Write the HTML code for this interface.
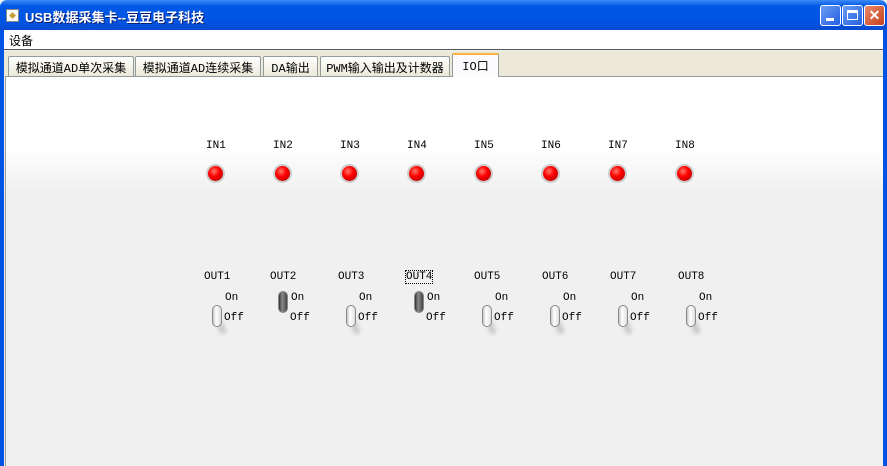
<!DOCTYPE html>
<html><head><meta charset="utf-8"><style>
*{margin:0;padding:0;box-sizing:border-box}
body{width:887px;height:466px;overflow:hidden;position:relative;background:#f0f0f0;font-family:"Liberation Mono","Noto Sans CJK SC","WenQuanYi Zen Hei",monospace;font-size:11px;color:#000}
.title{position:absolute;left:0;top:0;width:887px;height:30px;background:linear-gradient(#3d8af7,#0058e6 20%,#0054e3 70%,#0a4ad0);border-radius:7px 7px 0 0}
.title .t{position:absolute;left:25px;top:7px;color:#fff;font-weight:bold;font-size:13px;font-family:"Liberation Sans","Noto Sans CJK SC",sans-serif;text-shadow:1px 1px #0a1e6e}
.ico{position:absolute;left:6px;top:9px;width:13px;height:13px;background:#fff;border:1px solid #888}
.ico:after{content:"";position:absolute;left:3px;top:3px;width:5px;height:5px;background:#c8a040;transform:rotate(45deg)}
.btn{position:absolute;top:5px;width:21px;height:21px;border:1px solid #fff;border-radius:3px;background:linear-gradient(135deg,#6c9cf5,#2360e0)}
.btn.x{background:linear-gradient(135deg,#e8896a,#c8401c)}
.lb{position:absolute;left:0;top:30px;width:4px;height:436px;background:#0054e3}
.rb{position:absolute;right:0;top:30px;width:4px;height:436px;background:#0054e3}
.menu{position:absolute;left:4px;top:30px;width:879px;height:20px;background:#fff;border-bottom:1px solid #555}
.menu span{position:absolute;left:5px;top:2px;font-size:12px}
.tabs{position:absolute;left:4px;top:51px;width:879px;height:25px;background:#ece9d8}
.tab{position:absolute;top:5px;height:20px;border:1px solid #919b9c;border-bottom:none;background:linear-gradient(#fff,#ece9d8);font-size:12px;padding:2px 0 0 0;text-align:center;border-radius:2px 2px 0 0}
.tab.sel{top:2px;height:24px;background:#fcfcfe;border-top:2px solid #f7b53e;z-index:2}
.panel{position:absolute;left:5px;top:76px;width:878px;height:390px;border-left:1px solid #919b9c;border-top:1px solid #919b9c;background:linear-gradient(#fff 0,#fff 70px,#f0f0f0 115px)}
.lab{position:absolute;font-size:11px}
.led{position:absolute;width:15px;height:15px;border-radius:50%;background:radial-gradient(circle at 40% 35%,#ff7a6a,#f00 40%,#b00000 90%);box-shadow:0 0 0 2px #ccc}
.lev{position:absolute;width:10px;height:22px;border-radius:5px;background:linear-gradient(90deg,#c8c8c8,#fff 40%,#ddd);border:1px solid #888}
.lev.on{background:linear-gradient(90deg,#333,#888 40%,#444)}
.sh{position:absolute;width:6px;height:14px;background:#aaa;filter:blur(2px);transform:rotate(-25deg);opacity:.6}
</style></head><body>
<div class="title"><div class="ico"></div><div class="t">USB数据采集卡--豆豆电子科技</div>
<div class="btn" style="left:820px"><div style="position:absolute;left:5px;top:12px;width:8px;height:3px;background:#fff"></div></div>
<div class="btn" style="left:842px"><div style="position:absolute;left:4px;top:4px;width:11px;height:10px;border:1px solid #fff;border-top:3px solid #fff"></div></div>
<div class="btn x" style="left:864px;color:#fff;font:bold 14px 'Liberation Sans';text-align:center;line-height:19px">✕</div>
</div>
<div class="lb"></div><div class="rb"></div>
<div class="menu"><span>设备</span></div>
<div class="tabs">
<div class="tab" style="left:4px;width:126px">模拟通道AD单次采集</div>
<div class="tab" style="left:131px;width:126px">模拟通道AD连续采集</div>
<div class="tab" style="left:259px;width:55px">DA输出</div>
<div class="tab" style="left:316px;width:130px">PWM输入输出及计数器</div>
<div class="tab sel" style="left:448px;width:47px">IO口</div>
</div>
<div class="panel"></div>
<div id="c"></div>
<script>
var h='';
var ix=[215,282,349,416,483,550,617,684];
for(var i=0;i<8;i++){h+='<div class="lab" style="left:'+(ix[i]-9)+'px;top:140px">IN'+(i+1)+'</div><div class="led" style="left:'+(ix[i]-7)+'px;top:166px"></div>';}
var ox=[204,270,338,406,474,542,610,678];
for(var i=0;i<8;i++){var L=ox[i],on=(i==1||i==3);
h+='<div class="lab" style="left:'+L+'px;top:271px;'+(i==3?'outline:1px dotted #000':'')+'">OUT'+(i+1)+'</div>';
h+='<div class="lab" style="left:'+(L+21)+'px;top:292px">On</div><div class="lab" style="left:'+(L+20)+'px;top:312px">Off</div>';
if(!on)h+='<div class="sh" style="left:'+(L+14)+'px;top:320px"></div>';
h+='<div class="lev'+(on?' on':'')+'" style="left:'+(L+8)+'px;top:'+(on?291:305)+'px"></div>';}
document.getElementById('c').innerHTML=h;
</script>
</body></html>
